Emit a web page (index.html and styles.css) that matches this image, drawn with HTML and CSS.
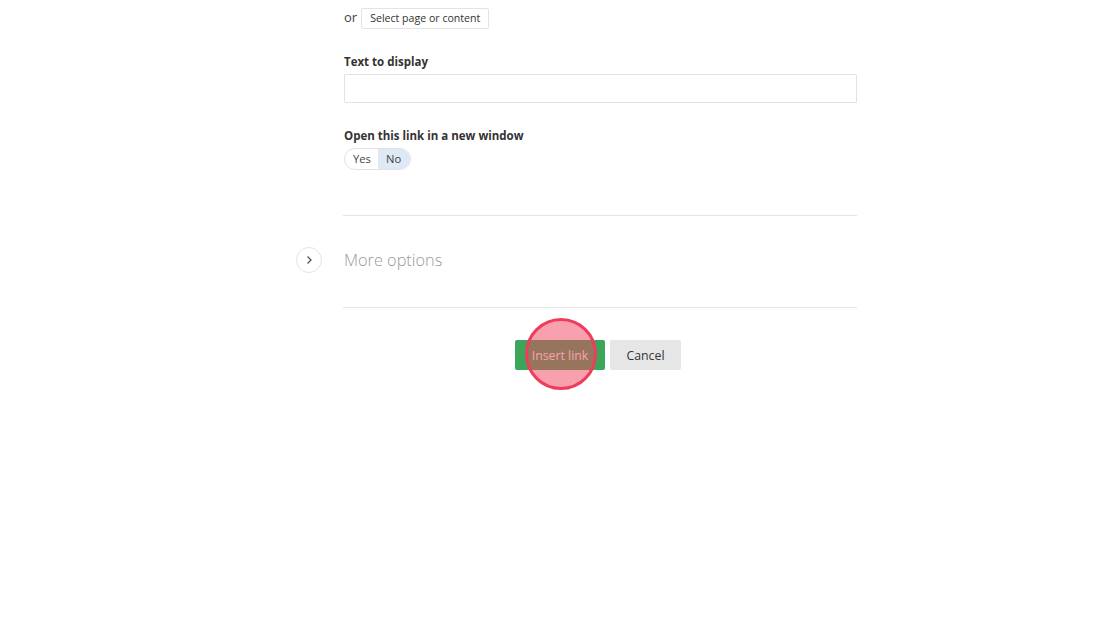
FILE: index.html
```html
<!DOCTYPE html>
<html>
<head>
<meta charset="utf-8">
<link rel="stylesheet" href="styles.css">
</head>
<body>
<div class="form">
  <div class="row-or">
    <span class="or">or</span>
    <button class="select-btn">Select page or content</button>
  </div>
  <label class="label first">Text to display</label>
  <div class="input"></div>
  <label class="label">Open this link in a new window</label>
  <div class="toggle">
    <span class="opt">Yes</span>
    <span class="opt active">No</span>
  </div>
  <div class="more">
    <span class="chev">
      <svg width="10" height="10" viewBox="0 0 10 10"><path d="M3.5 1.5 L7 5 L3.5 8.5" fill="none" stroke="#555" stroke-width="1.3"/></svg>
    </span>
    <span class="more-text">More options</span>
  </div>
  <div class="actions">
    <div class="insert-wrap">
      <button class="btn insert">Insert link</button>
      <span class="click"></span>
    </div>
    <button class="btn cancel">Cancel</button>
  </div>
</div>
</body>
</html>
```
FILE: styles.css
```css
html, body {
  margin: 0;
  padding: 0;
  background: #fff;
  min-height: 100vh;
}
body {
  font-family: "Open Sans", "Liberation Sans", sans-serif;
  color: #333;
}
.form {
  width: 513px;
  margin-left: 344px;
  padding-top: 8px;
}
.row-or {
  display: flex;
  align-items: center;
  gap: 4px;
  height: 21px;
}
.or {
  font-size: 13px;
  color: #444;
  margin-top: -3px;
}
.select-btn {
  font-family: inherit;
  font-size: 10.6px;
  color: #333;
  background: #fff;
  border: 1px solid #e3e3e3;
  border-radius: 2px;
  height: 21px;
  padding: 0 8px;
  white-space: nowrap;
  line-height: 19px;
}
.label {
  display: block;
  font-size: 11.5px;
  font-weight: 700;
  color: #333;
  line-height: 18px;
  margin-top: 24px;
  margin-bottom: 3px;
}
.input {
  height: 27px;
  border: 1px solid #e2e2e2;
  border-radius: 1px;
  background: #fff;
}
.toggle {
  display: flex;
  width: fit-content;
  height: 20px;
  border: 1px solid #e2e2e2;
  border-radius: 11px;
  overflow: hidden;
}
.opt {
  font-size: 11.2px;
  line-height: 20px;
  color: #444;
  padding: 0 8px;
}
.opt:first-child {
  width: 17px;
}
.opt.active {
  background: #dde9f4;
  padding: 0 9px 0 8px;
}
.more {
  margin-top: 45px;
  border-top: 1px solid #e4e4e4;
  border-bottom: 1px solid #e4e4e4;
  height: 91px;
  display: flex;
  align-items: center;
  margin-left: -48px;
  padding-left: 48px;
  border-image: linear-gradient(to right, transparent 48px, #e4e4e4 48px) 1;
  border-left: 0;
  border-right: 0;
  position: relative;
}
.chev {
  position: absolute;
  left: 0;
  top: 31px;
  width: 24px;
  height: 24px;
  border: 1px solid #e3e3e3;
  border-radius: 50%;
  display: flex;
  align-items: center;
  justify-content: center;
}
.more-text {
  font-size: 16.3px;
  font-weight: 300;
  color: #999;
  margin-top: -4px;
}
.actions {
  display: flex;
  justify-content: center;
  gap: 5px;
  margin-top: 32px;
  padding-right: 5px;
}
.insert-wrap {
  position: relative;
}
.btn {
  font-family: inherit;
  font-size: 12.3px;
  height: 30px;
  border: 0;
  border-radius: 2px;
  padding: 0;
  display: block;
}
.insert {
  width: 90px;
  background: #3aa65a;
  color: #fff;
}
.cancel {
  width: 71px;
  background: #e6e6e6;
  color: #333;
}
.click {
  position: absolute;
  left: 10px;
  top: -22px;
  width: 66px;
  height: 66px;
  border-radius: 50%;
  border: 3px solid #ee3d5a;
  background: rgba(243, 65, 93, 0.5);
  pointer-events: none;
  z-index: 2;
}
```
